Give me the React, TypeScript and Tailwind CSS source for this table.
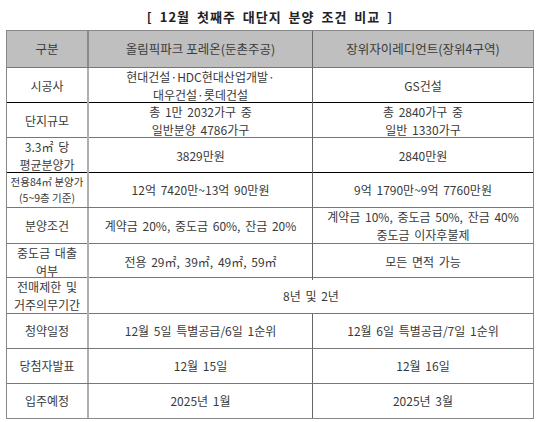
import React from 'react';

type Row = {
  label: React.ReactNode;
  a: React.ReactNode;
  b?: React.ReactNode;
  h: number;
  line: string;
  small?: boolean;
};

const rows: Row[] = [
  { label: '시공사', a: <>현대건설·HDC현대산업개발·<br />대우건설·롯데건설</>, b: 'GS건설', h: 35, line: 'border-b-black' },
  { label: '단지규모', a: <>총 1만 2032가구 중<br />일반분양 4786가구</>, b: <>총 2840가구 중<br />일반 1330가구</>, h: 35, line: 'border-b-[#777]' },
  { label: <>3.3㎡ 당<br />평균분양가</>, a: '3829만원', b: '2840만원', h: 35, line: 'border-b-black' },
  { label: <>전용84㎡ 분양가<br />(5~9층 기준)</>, a: '12억 7420만~13억 90만원', b: '9억 1790만~9억 7760만원', h: 35, line: 'border-b-[#777]', small: true },
  { label: '분양조건', a: '계약금 20%, 중도금 60%, 잔금 20%', b: <>계약금 10%, 중도금 50%, 잔금 40%<br />중도금 이자후불제</>, h: 36, line: 'border-b-[#777]' },
  { label: <>중도금 대출<br />여부</>, a: '전용 29㎡, 39㎡, 49㎡, 59㎡', b: '모든 면적 가능', h: 34, line: 'border-b-[#777]' },
  { label: <>전매제한 및<br />거주의무기간</>, a: '8년 및 2년', h: 36, line: 'border-b-[#777]' },
  { label: '청약일정', a: '12월 5일 특별공급/6일 1순위', b: '12월 6일 특별공급/7일 1순위', h: 35, line: 'border-b-[#777]' },
  { label: '당첨자발표', a: '12월 15일', b: '12월 16일', h: 35, line: 'border-b-[#777]' },
  { label: '입주예정', a: '2025년 1월', b: '2025년 3월', h: 35, line: 'border-b-[#888]' },
];

const font = { fontFamily: '"Noto Sans CJK KR", "Noto Sans", sans-serif' };

export default function App() {
  return (
    <div className="w-[540px] h-[422px] bg-white text-[#3a3a3a]" style={font}>
      <div className="h-[30px] flex items-center justify-center pt-[4px]">
        <h1 className="text-[13px] font-bold text-[#222] tracking-[1px] [word-spacing:3px]">
          [ 12월 첫째주 대단지 분양 조건 비교 ]
        </h1>
      </div>
      <div className="ml-[6px] w-[528px] border border-[#888] border-b-0">
        <div className="grid grid-cols-[82px_224px_1fr] h-[37px] bg-[#bfbfbf] border-b border-b-[#777] text-[12.5px] leading-none">
          <div className="flex items-center justify-center border-r-2 border-r-[#8a8a8a]">구분</div>
          <div className="flex items-center justify-center border-r border-r-[#666]">올림픽파크 포레온(둔촌주공)</div>
          <div className="flex items-center justify-center">장위자이레디언트(장위4구역)</div>
        </div>
        {rows.map((r, i) => (
          <div
            key={i}
            className={`grid grid-cols-[82px_224px_1fr] border-b ${r.line} text-[12px] leading-[18px] [word-spacing:2px]`}
            style={{ height: r.h }}
          >
            <div
              className={`flex items-center justify-center text-center border-r-2 border-r-[#b0b0b0] ${r.small ? 'text-[10.5px] leading-[16px] [word-spacing:0px]' : ''}`}
            >
              <span>{r.label}</span>
            </div>
            {r.b === undefined ? (
              <div className="col-span-2 flex items-center justify-center text-center">
                <span>{r.a}</span>
              </div>
            ) : (
              <>
                <div className="flex items-center justify-center text-center border-r border-r-[#666]">
                  <span>{r.a}</span>
                </div>
                <div className="flex items-center justify-center text-center">
                  <span>{r.b}</span>
                </div>
              </>
            )}
          </div>
        ))}
      </div>
    </div>
  );
}
